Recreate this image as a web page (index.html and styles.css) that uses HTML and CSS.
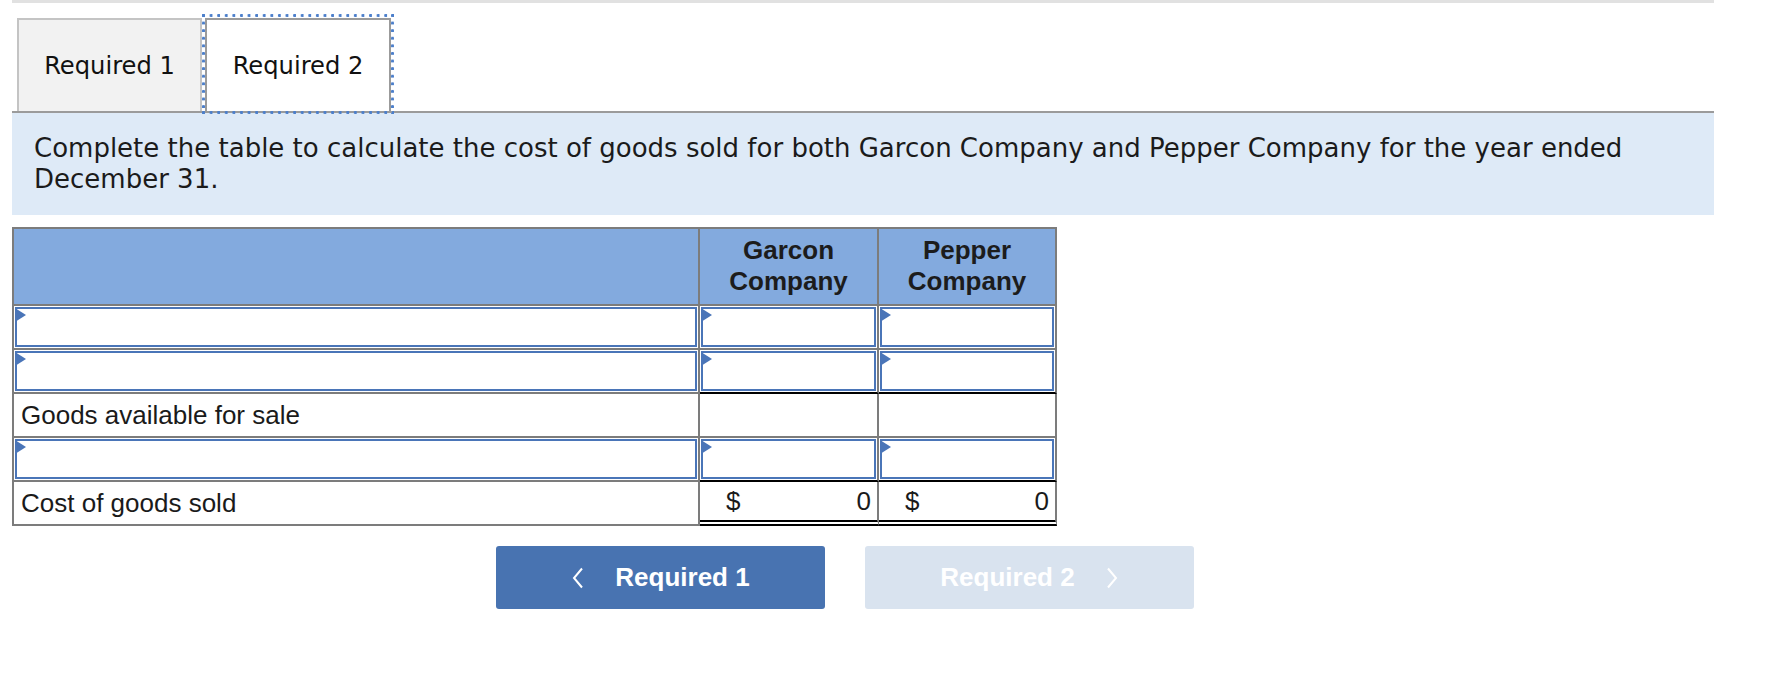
FILE: index.html
```html
<!DOCTYPE html>
<html lang="en">
<head>
<meta charset="utf-8">
<title>Required 2</title>
<link rel="stylesheet" href="styles.css">
</head>
<body>
<div class="page">
  <div class="topline"></div>
  <div class="tabs">
    <div class="tab tab-off">Required 1</div>
    <div class="tab tab-on">Required 2</div>
  </div>
  <div class="prompt">Complete the table to calculate the cost of goods sold for both Garcon Company and Pepper Company for the year ended December 31.</div>
  <table class="grid">
    <thead>
      <tr>
        <th class="c1"></th>
        <th class="c2">Garcon<br>Company</th>
        <th class="c3">Pepper<br>Company</th>
      </tr>
    </thead>
    <tbody>
      <tr>
        <td class="in"><div class="field"></div></td>
        <td class="in"><div class="field"></div></td>
        <td class="in"><div class="field"></div></td>
      </tr>
      <tr>
        <td class="in"><div class="field"></div></td>
        <td class="in pre"><div class="field"></div></td>
        <td class="in pre"><div class="field"></div></td>
      </tr>
      <tr>
        <td class="label">Goods available for sale</td>
        <td class="blank"></td>
        <td class="blank"></td>
      </tr>
      <tr>
        <td class="in"><div class="field"></div></td>
        <td class="in pre"><div class="field"></div></td>
        <td class="in pre"><div class="field"></div></td>
      </tr>
      <tr>
        <td class="label">Cost of goods sold</td>
        <td class="money"><div class="amt"><span>$</span><span>0</span></div></td>
        <td class="money"><div class="amt"><span>$</span><span>0</span></div></td>
      </tr>
    </tbody>
  </table>
  <div class="nav">
    <div class="btn btn-prev">
      <svg class="chev" width="14" height="22" viewBox="0 0 14 22"><polyline points="11,1.5 3,11 11,20.5" fill="none" stroke="#ffffff" stroke-width="2"/></svg>
      <span>Required 1</span>
    </div>
    <div class="btn btn-next">
      <span>Required 2</span>
      <svg class="chev" width="14" height="22" viewBox="0 0 14 22"><polyline points="3,1.5 11,11 3,20.5" fill="none" stroke="#ffffff" stroke-width="2"/></svg>
    </div>
  </div>
</div>
</body>
</html>
```
FILE: styles.css
```css
html, body {
  margin: 0;
  padding: 0;
  background: #ffffff;
}

.page {
  margin-left: 12px;
  width: 1702px;
}

.topline {
  height: 3px;
  background: #e1e1e1;
}

.tabs {
  display: flex;
  padding: 15px 0 0 5px;
  border-bottom: 2px solid #9b9b9b;
}

.tab {
  box-sizing: border-box;
  height: 93px;
  display: flex;
  align-items: center;
  justify-content: center;
  font-family: "DejaVu Sans", Verdana, sans-serif;
  font-size: 24.2px;
  color: #111111;
  border: 2px solid #c4c4c4;
  border-bottom: none;
}

.tab-off {
  width: 185px;
  background: #f2f2f2;
}

.tab-on {
  position: relative;
  width: 186px;
  margin-left: 3px;
  background: #ffffff;
  border-color: #9b9b9b;
}

.tab-on::after {
  content: "";
  position: absolute;
  left: -5px;
  right: -5px;
  top: -6px;
  bottom: -3px;
  background-image:
    radial-gradient(circle at 1.5px 1.5px, #4c7fcb 1.3px, transparent 1.8px),
    radial-gradient(circle at 1.5px 1.5px, #4c7fcb 1.3px, transparent 1.8px),
    radial-gradient(circle at 1.5px 1.5px, #4c7fcb 1.3px, transparent 1.8px),
    radial-gradient(circle at 1.5px 1.5px, #4c7fcb 1.3px, transparent 1.8px);
  background-size: 7.6px 3px, 7.6px 3px, 3px 7.6px, 3px 7.6px;
  background-repeat: repeat-x, repeat-x, repeat-y, repeat-y;
  background-position: left top, left bottom, left top, right top;
}

.prompt {
  background: #deeaf7;
  padding: 20px 22px 20px 22px;
  font-family: "DejaVu Sans", Verdana, sans-serif;
  font-size: 26px;
  line-height: 31px;
  color: #1b1b1b;
}

.grid {
  margin-top: 12px;
  border-collapse: separate;
  border-spacing: 0;
  table-layout: fixed;
  border-top: 2px solid #7c7c7c;
  border-left: 2px solid #7c7c7c;
  font-family: "Liberation Sans", Arial, sans-serif;
  font-size: 26px;
  color: #1a1a1a;
}

.grid th,
.grid td {
  box-sizing: border-box;
  border-right: 2px solid #7c7c7c;
  border-bottom: 2px solid #7c7c7c;
  padding: 0;
}

.grid th {
  background: #83aade;
  font-weight: bold;
  line-height: 31px;
  padding: 6px 0 7px 0;
  text-align: center;
  color: #1c1c1c;
}

.c1 { width: 686px; }
.c2 { width: 179px; }
.c3 { width: 178px; }

.grid td.in {
  padding: 1px;
}

.grid td.pre {
  border-bottom-color: #000000;
}

.field {
  position: relative;
  box-sizing: border-box;
  height: 40px;
  border: 2px solid #4a75b8;
  background: #ffffff;
}

.field::before {
  content: "";
  position: absolute;
  left: -2px;
  top: -1px;
  width: 0;
  height: 0;
  border-left: 11px solid #4a75b8;
  border-top: 7px solid transparent;
  border-bottom: 7px solid transparent;
}

.grid td.label {
  padding: 6px 7px;
  line-height: 30px;
}

.grid td.blank {
  height: 44px;
}

.grid td.money {
  border-bottom: 6px double #000000;
  padding: 4px 0;
  line-height: 30px;
}

.amt {
  display: flex;
  justify-content: space-between;
  padding: 0 6px 0 26px;
}

.nav {
  display: flex;
  gap: 40px;
  padding: 20px 0 0 484px;
}

.btn {
  box-sizing: border-box;
  width: 329px;
  height: 63px;
  border-radius: 3px;
  display: flex;
  align-items: center;
  justify-content: center;
  gap: 30px;
  font-family: "Liberation Sans", Arial, sans-serif;
  font-weight: bold;
  font-size: 26px;
  color: #ffffff;
}

.btn-prev {
  background: #4873b1;
}

.btn-next {
  background: #d9e3ef;
}

.chev {
  display: block;
}
```
